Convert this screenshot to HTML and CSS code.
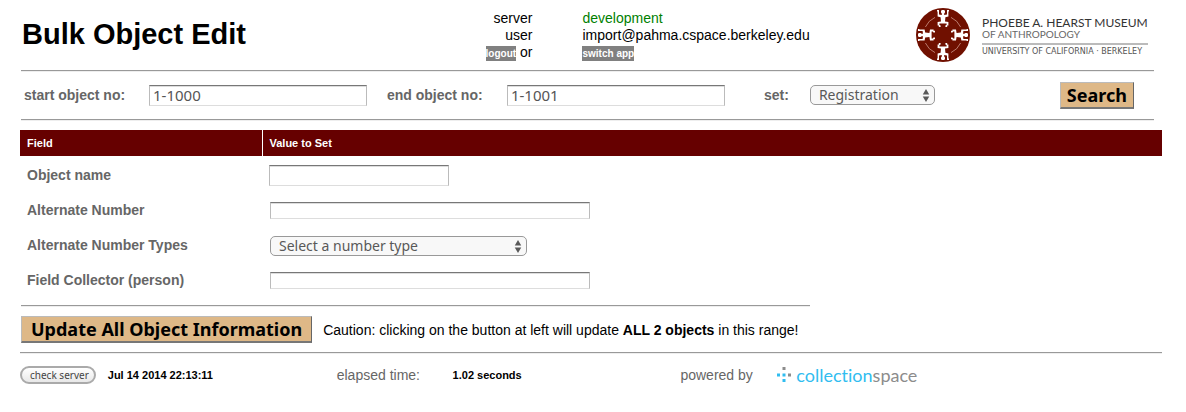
FILE: index.html
```html
<!DOCTYPE html>
<html lang="en">
<head>
<meta charset="utf-8">
<title>Bulk Object Edit</title>
<link rel="stylesheet" href="styles.css">
</head>
<body>
<header class="header">
  <h1 class="title">Bulk Object Edit</h1>
  <dl class="session">
    <dt>server</dt><dd class="env">development</dd>
    <dt>user</dt><dd>import@pahma.cspace.berkeley.edu</dd>
    <dt><a class="tag" href="#">logout</a> or</dt><dd><a class="tag" href="#">switch app</a></dd>
  </dl>
  <div class="museum">
    <svg class="seal" viewBox="-27 -27 54 54" aria-hidden="true">
      <defs>
        <g id="figure">
          <path d="M-6 -25 L-4 -25 L-4 -20.4 L-1.2 -20 L-1.2 -21.4 L-2 -22.4 L-2 -24 L-1.2 -25 L1.2 -25 L2 -24 L2 -22.4 L1.2 -21.4 L1.2 -20 L4 -20.4 L4 -25 L6 -25 L6 -23.6 L5.4 -23.6 L5.4 -18.4 L2.4 -17.8 L2 -13.6 L5.4 -13 L5.4 -9.4 L4.2 -9.4 L4.2 -8 L2.4 -8 L2.4 -9.6 L3.6 -10.2 L3.6 -11.4 L-3.6 -11.4 L-3.6 -10.2 L-2.4 -9.6 L-2.4 -8 L-4.2 -8 L-4.2 -9.4 L-5.4 -9.4 L-5.4 -13 L-2 -13.6 L-2.4 -17.8 L-5.4 -18.4 L-5.4 -23.6 L-6 -23.6 Z" fill="#fff"/>
          <path d="M8 -17.6 A19.3 19.3 0 0 1 17.6 -8" fill="none" stroke="#d9a79c" stroke-width=".7"/>
        </g>
      </defs>
      <circle r="27" fill="#701000"/>
      <use href="#figure"/>
      <use href="#figure" transform="rotate(90)"/>
      <use href="#figure" transform="rotate(180)"/>
      <use href="#figure" transform="rotate(270)"/>
    </svg>
    <div class="museum-text">
      <div class="museum-name">PHOEBE A. HEARST MUSEUM</div>
      <div class="museum-dept">OF ANTHROPOLOGY</div>
      <div class="museum-univ">UNIVERSITY OF CALIFORNIA · BERKELEY</div>
    </div>
  </div>
</header>
<form>
  <div class="search">
    <label for="start">start object no:</label>
    <input class="field range" id="start" type="text" value="1-1000">
    <label for="end">end object no:</label>
    <input class="field range" id="end" type="text" value="1-1001">
    <label for="set">set:</label>
    <span class="picker picker-set">
      <select id="set"><option>Registration</option></select>
      <svg class="arrows" viewBox="0 0 8 14" aria-hidden="true"><path d="M4 0 L7.5 6 H.5 Z M4 14 L7.5 8 H.5 Z" fill="#595959"/></svg>
    </span>
    <button class="action" type="button">Search</button>
  </div>
  <table class="fields">
    <thead><tr><th class="col-name" scope="col">Field</th><th scope="col">Value to Set</th></tr></thead>
    <tbody>
      <tr><td><label for="name">Object name</label></td><td><input class="field name" id="name" type="text"></td></tr>
      <tr><td><label for="altnum">Alternate Number</label></td><td><input class="field slim" id="altnum" type="text"></td></tr>
      <tr><td><label for="alttype">Alternate Number Types</label></td><td>
        <span class="picker picker-type">
          <select id="alttype"><option>Select a number type</option></select>
          <svg class="arrows" viewBox="0 0 8 14" aria-hidden="true"><path d="M4 0 L7.5 6 H.5 Z M4 14 L7.5 8 H.5 Z" fill="#595959"/></svg>
        </span></td></tr>
      <tr><td><label for="collector">Field Collector (person)</label></td><td><input class="field slim" id="collector" type="text"></td></tr>
    </tbody>
  </table>
  <div class="update">
    <button class="action action-wide" type="button">Update All Object Information</button>
    <span>Caution: clicking on the button at left will update <b>ALL 2 objects</b> in this range!</span>
  </div>
</form>
<footer class="footer">
  <div class="status"><button class="check" type="button">check server</button><b>Jul 14 2014 22:13:11</b></div>
  <span>elapsed time:</span>
  <b>1.02 seconds</b>
  <span>powered by</span>
  <a class="brand" href="#">
    <svg class="brand-mark" viewBox="0 0 16 16" aria-hidden="true">
      <path d="M6.5 0h3v3h-3zM12 6.5h3v3h-3z" fill="#8c8c8c"/>
      <path d="M1 6.5h3v3h-3zM6.5 6.5h3v3h-3zM6.5 12h3v3h-3z" fill="#31bdf0"/>
    </svg>
    <span class="brand-name">collection<span class="brand-space">space</span></span>
  </a>
</footer>
</body>
</html>
```
FILE: styles.css
```css
* { box-sizing: border-box; }
body {
  margin: 0;
  padding: 0 24px 0 20px;
  background: #fff;
  color: #000;
  font-family: "Liberation Sans", Arial, sans-serif;
  font-size: 14px;
}
.header {
  display: grid;
  grid-template-columns: 450fr 446fr 228px;
  height: 72px;
  margin: 0 8px 0 1px;
  padding-right: 10px;
  border-bottom: 1px solid #eee;
  box-shadow: inset 0 -1px #999;
}
.title { margin: 0; padding: 16px 0 0 1px; font-size: 29px; line-height: 36px; }
.session {
  display: grid;
  grid-template-columns: 62px 1fr;
  grid-auto-rows: 17px;
  column-gap: 50px;
  margin: 0;
  padding-top: 10px;
  line-height: 17px;
  white-space: nowrap;
}
.session dt { text-align: right; }
.session dd { margin: 0; }
.env { color: #008000; }
.tag {
  display: inline-block;
  background: #808080;
  color: #fff;
  font-size: 10px;
  line-height: 15px;
  font-weight: bold;
  text-decoration: none;
}
.museum { display: flex; gap: 12px; padding-top: 8px; }
.seal { width: 54px; height: 54px; flex: none; }
.museum-text { padding-top: 8px; white-space: nowrap; font-family: Lato, sans-serif; }
.museum-name { color: #333; font-size: 12px; line-height: 13px; }
.museum-dept { color: #666; font-size: 10px; line-height: 11px; }
.museum-univ {
  margin-top: 3px;
  border-top: 2px solid #bbb;
  color: #555;
  font-family: "DejaVu Sans", sans-serif;
  font-size: 8px;
  line-height: 14px;
}
.search {
  display: grid;
  grid-template-columns: 125fr 238fr 120fr 257fr 46fr 250fr auto;
  align-items: center;
  height: 49px;
  margin: 0 8px 0 1px;
  padding: 0 20px 2px 3px;
  border-bottom: 1px solid #eee;
  box-shadow: inset 0 -1px #999;
}
label { color: #666; font-weight: bold; }
.field {
  display: block;
  border: 1px solid #bbb;
  border-top: 1px solid #777;
  border-bottom-color: #ddd;
  box-shadow: inset 0 1px #ddd;
  background: #fff;
  color: #555;
  font: 15px "Noto Sans", sans-serif;
  padding: 0 3px;
}
.range { width: 218px; height: 21px; }
.name { width: 180px; height: 21px; }
.slim { width: 320px; height: 17px; margin-left: 1px; }
.picker { position: relative; display: block; }
.picker select {
  appearance: none;
  display: block;
  width: 100%;
  height: 20px;
  margin: 0;
  padding: 0 8px;
  border: 1px solid #999;
  border-radius: 5px;
  background: #f8f8f8;
  color: #595959;
  font: 14px/18px "Noto Sans", sans-serif;
}
.picker-set { width: 125px; }
.picker-type { width: 257px; margin-left: 1px; }
.arrows { position: absolute; right: 5px; top: 4px; width: 8px; height: 13px; pointer-events: none; }
.action {
  height: 27px;
  padding: 0 6px;
  border: 1px solid #bbb;
  border-right-color: #666;
  border-bottom: 2px solid #777;
  background: #deb887;
  color: #000;
  font: bold 18px/22px "Noto Sans", sans-serif;
  white-space: nowrap;
}
.action-wide { padding: 0 9px; }
.fields { width: 100%; margin-top: 9px; border-collapse: collapse; table-layout: fixed; }
.fields th {
  height: 26px;
  padding: 0 7px;
  background: #660000;
  color: #fff;
  font-size: 11px;
  text-align: left;
}
.fields .col-name { width: 242px; border-right: 1px solid #fff; }
.fields td { height: 35px; padding: 0 7px; vertical-align: middle; }
.fields label { display: block; padding-bottom: 2px; }
.fields tbody tr:first-child td { height: 37px; padding-top: 2px; }
.update {
  display: flex;
  align-items: center;
  gap: 11px;
  margin-left: 1px;
  padding: 18px 0 9px;
  position: relative;
  white-space: nowrap;
}
.update::before {
  content: "";
  position: absolute;
  top: 7px;
  left: 0;
  width: 789px;
  border-top: 1px solid #999;
  border-bottom: 1px solid #eee;
}
.footer {
  display: grid;
  grid-template-columns: 317fr 116fr 228fr 96fr 386fr;
  align-items: center;
  height: 45px;
  border-top: 1px solid #999;
  box-shadow: inset 0 1px #eee;
  color: #666;
}
.footer b { color: #000; font-size: 11px; }
.status { display: flex; align-items: center; gap: 12px; }
.check {
  height: 18px;
  padding: 0 5px 0 8px;
  border: 2px solid #aaa;
  border-radius: 9px;
  background: linear-gradient(#fff, #e8e8e8);
  color: #444;
  font: 10px/14px "Noto Sans", sans-serif;
}
.brand { display: flex; align-items: center; gap: 4px; text-decoration: none; }
.brand-mark { width: 16px; height: 16px; }
.brand-name { color: #31bdf0; font: 18px/28px Lato, sans-serif; font-variant-ligatures: none; }
.brand-space { color: #8c8c8c; }
```
